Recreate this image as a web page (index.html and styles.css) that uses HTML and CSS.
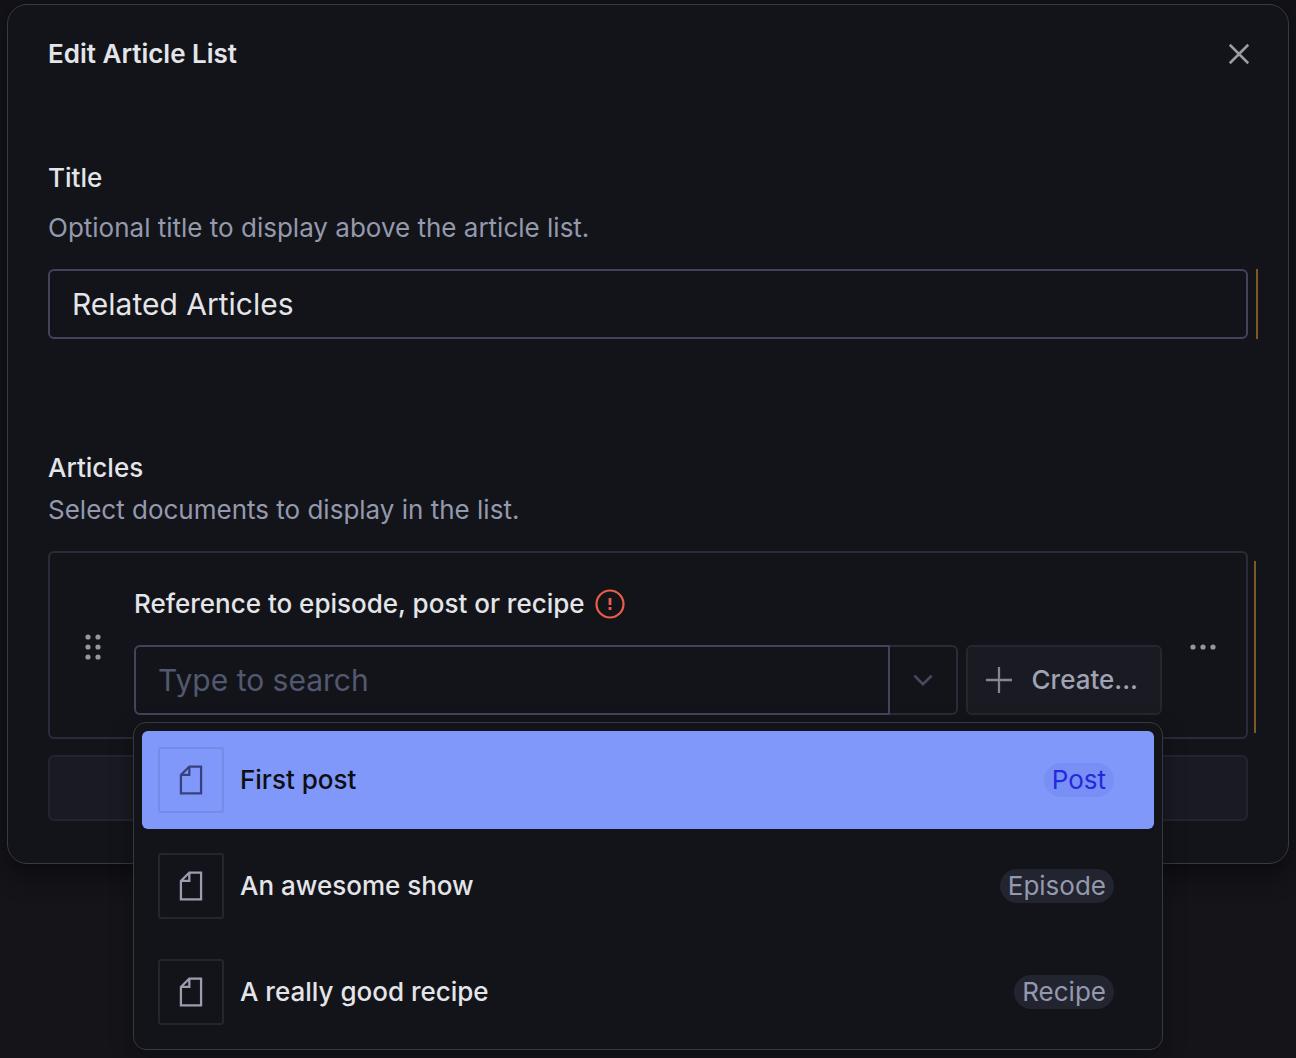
FILE: index.html
```html
<!DOCTYPE html>
<html lang="en">
<head>
<meta charset="utf-8">
<title>Edit Article List</title>
<link rel="stylesheet" href="styles.css">
</head>
<body>
<svg width="0" height="0" class="defs">
  <symbol id="document" viewBox="0 0 25 25"><path d="M11.5 4.5V9.5H6.5M11.5 4.5H18.5V20.5H6.5V9.5L11.5 4.5Z"/></symbol>
</svg>
<main class="dialog">
  <header class="dialog-header">
    <h1>Edit Article List</h1>
    <svg class="icon close" viewBox="0 0 25 25"><path d="M18 7L7 18M7 7L18 18"/></svg>
  </header>

  <section class="field title-field">
    <h2>Title</h2>
    <p>Optional title to display above the article list.</p>
    <div class="input changed">Related Articles</div>
  </section>

  <section class="field articles-field">
    <h2>Articles</h2>
    <p>Select documents to display in the list.</p>
    <div class="item changed">
      <svg class="handle" viewBox="0 0 20 28"><circle cx="5" cy="4" r="2.6"/><circle cx="15" cy="4" r="2.6"/><circle cx="5" cy="14" r="2.6"/><circle cx="15" cy="14" r="2.6"/><circle cx="5" cy="24" r="2.6"/><circle cx="15" cy="24" r="2.6"/></svg>
      <div class="reference">
        <div class="reference-label">
          <span>Reference to episode, post or recipe</span>
          <svg class="error" viewBox="0 0 30 30"><circle cx="15" cy="15" r="13.5"/><path class="mark" d="M15 9V16M15 18V21"/></svg>
        </div>
        <div class="controls">
          <div class="search">Type to search</div>
          <div class="toggle"><svg viewBox="0 0 25 25"><path d="M17 10.2L12.5 14.7L8 10.2"/></svg></div>
          <div class="create"><svg class="icon" viewBox="0 0 25 25"><path d="M12.5 4.8V20.2M4.8 12.5H20.2"/></svg><span>Create...</span></div>
        </div>
        <div class="popover">
          <div class="option selected">
            <div class="thumb"><svg class="icon"><use href="#document"/></svg></div>
            <span class="name">First post</span><span class="badge">Post</span>
          </div>
          <div class="option">
            <div class="thumb"><svg class="icon"><use href="#document"/></svg></div>
            <span class="name">An awesome show</span><span class="badge">Episode</span>
          </div>
          <div class="option">
            <div class="thumb"><svg class="icon"><use href="#document"/></svg></div>
            <span class="name">A really good recipe</span><span class="badge">Recipe</span>
          </div>
        </div>
      </div>
      <svg class="more" viewBox="0 0 28 20"><circle cx="4" cy="10" r="2.6"/><circle cx="14" cy="10" r="2.6"/><circle cx="24" cy="10" r="2.6"/></svg>
    </div>
    <div class="add-item"></div>
  </section>
</main>
</body>
</html>
```

FILE: styles.css
```css
* { box-sizing: border-box; }
body {
  margin: 0;
  height: 1058px;
  padding: 4px 7px;
  overflow: hidden;
  background: #141419;
  color: #e4e5e9;
  font: 26px/34px Inter, "Liberation Sans", sans-serif;
}
svg { display: block; fill: none; stroke: currentColor; stroke-width: 1.35; flex: none; }
.defs { position: absolute; }
.icon { width: 42px; height: 42px; }
h1, h2, p { margin: 0; font-size: 26px; }
h1 { font-weight: 600; }
h2 { font-weight: 500; }
p { color: #9499ad; }

.dialog {
  height: 860px;
  padding: 28px 40px 0;
  border: 1px solid #373848;
  border-radius: 20px;
  background: #131419;
  box-shadow: 0 14px 24px -4px #0d0d11, 0 0 16px #0f0f14;
}
.dialog-header { display: flex; justify-content: space-between; align-items: center; height: 42px; }
.dialog-header .close { margin-right: -12px; color: #9b9ca5; stroke-width: 1.5; }

.title-field { margin-top: 86px; }
.title-field p { margin-top: 16px; }
.input {
  margin-top: 24px;
  height: 70px;
  padding: 0 22px;
  border: 2px solid #41455b;
  border-radius: 6px;
  font-size: 30px;
  line-height: 66px;
}
.changed { position: relative; }
.changed::after {
  content: "";
  position: absolute;
  top: -2px;
  bottom: -2px;
  right: -12px;
  width: 2px;
  background: #7b5a28;
}

.articles-field { margin-top: 112px; }
.articles-field p { margin-top: 8px; }
.item {
  display: flex;
  margin-top: 24px;
  height: 188px;
  border: 2px solid #2a2a3a;
  border-radius: 6px;
}
.item.changed::after { top: 8px; bottom: 4px; right: -10px; }
.handle { width: 20px; height: 28px; margin: 80px 31px 0 33px; }
.more { width: 28px; height: 20px; margin: 84px 0 0 27px; }
.handle, .more { fill: #95969e; stroke: none; }
.reference { position: relative; width: 1028px; padding-top: 34px; }
.reference-label { display: flex; align-items: center; gap: 10px; font-weight: 500; }
.error { width: 30px; height: 30px; color: #ea5d49; stroke-width: 2.2; }
.error .mark { stroke-width: 2.8; }
.controls { display: flex; margin-top: 24px; height: 70px; }
.search {
  width: 756px;
  padding-left: 22px;
  border: 2px solid #41455b;
  border-radius: 6px 0 0 6px;
  color: #515870;
  font-size: 30px;
  line-height: 66px;
}
.toggle {
  display: flex;
  align-items: center;
  justify-content: center;
  width: 68px;
  margin-right: 8px;
  border: 2px solid #2a2a3a;
  border-left: 0;
  border-radius: 0 6px 6px 0;
  color: #454a62;
}
.toggle svg { width: 48px; height: 48px; }
.create {
  display: flex;
  align-items: center;
  width: 196px;
  padding-left: 10px;
  gap: 11.5px;
  border: 2px solid #262633;
  border-radius: 6px;
  background: #1a1a23;
  color: #9fa3b5;
  font-weight: 500;
}
.create .icon { color: #85868f; }
.add-item { margin-top: 16px; height: 66px; border: 2px solid #242431; border-radius: 6px; background: #1a1a23; }

.popover {
  position: absolute;
  z-index: 1;
  top: 169px;
  left: -1px;
  display: flex;
  flex-direction: column;
  gap: 8px;
  width: 1030px;
  padding: 8px;
  border: 1px solid #373842;
  border-radius: 13px;
  background: #131419;
  box-shadow: 0 8px 22px -2px rgba(8, 8, 12, .55);
}
.option { display: flex; align-items: center; height: 98px; padding: 0 40px 0 16px; border-radius: 6px; }
.thumb {
  display: flex;
  align-items: center;
  justify-content: center;
  width: 66px;
  height: 66px;
  margin-right: 16px;
  border: 2px solid #25262b;
  border-radius: 3px;
  color: #9b9eb0;
}
.name { font-weight: 500; }
.badge { margin-left: auto; padding: 0 8px; border-radius: 17px; background: #22242f; color: #9499ad; }
.selected { background: #8098f9; color: #0e0f14; }
.selected .thumb { border-color: #758be5; color: #384180; }
.selected .badge { background: #7890f6; color: #2529dd; }
```
